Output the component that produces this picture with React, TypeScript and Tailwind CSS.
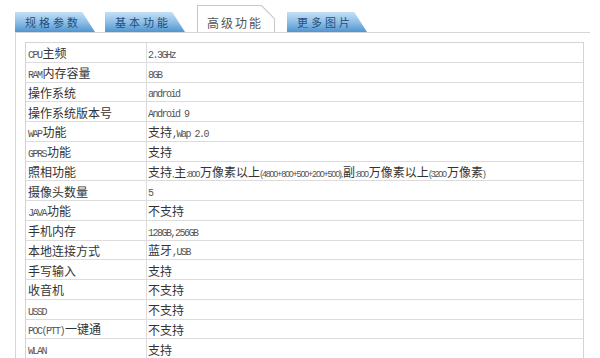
import React from "react";

const rows: { label: string; value: string; small?: boolean }[] = [
  { label: "CPU主频", value: "2.3GHz" },
  { label: "RAM内存容量", value: "8GB" },
  { label: "操作系统", value: "android" },
  { label: "操作系统版本号", value: "Android 9" },
  { label: "WAP功能", value: "支持,Wap 2.0" },
  { label: "GPRS功能", value: "支持" },
  {
    label: "照相功能",
    value: "支持,主:800万像素以上(4800+800+500+200+500),副:800万像素以上(3200万像素)",
    small: true
  },
  { label: "摄像头数量", value: "5" },
  { label: "JAVA功能", value: "不支持" },
  { label: "手机内存", value: "128GB,256GB" },
  { label: "本地连接方式", value: "蓝牙,USB" },
  { label: "手写输入", value: "支持" },
  { label: "收音机", value: "不支持" },
  { label: "USSD", value: "不支持" },
  { label: "POC(PTT)一键通", value: "不支持" },
  { label: "WLAN", value: "支持" }
];

// split text into CJK / latin runs so each gets its own size
const Mixed = ({ text, small }: { text: string; small?: boolean }) => {
  const parts = text.match(/[\u3000-\u9fff\uff00-\uffef]+|[^\u3000-\u9fff\uff00-\uffef]+/g) || [];
  return (
    <>
      {parts.map((p, i) =>
        /[\u3000-\u9fff\uff00-\uffef]/.test(p) ? (
          <span key={i} className="text-[12px] text-[#333] [font-family:'Noto_Sans_CJK_SC',sans-serif]">
            {p}
          </span>
        ) : small ? (
          <span key={i} className="text-[9px] tracking-[-1.2px] text-[#555] [font-family:'Liberation_Sans',sans-serif] pr-[1px]">
            {p}
          </span>
        ) : (
          <span key={i} className="text-[10px] tracking-[-1.5px] text-[#555] [font-family:'Liberation_Mono',monospace] pr-[1px]">
            {p}
          </span>
        )
      )}
    </>
  );
};

const Tab = ({ label }: { label: string }) => (
  <div className="w-[80px] h-[20px] [clip-path:polygon(0_0,84%_0,100%_100%,0_100%)] bg-gradient-to-b from-[#c4e0f5] via-[#8fbfe6] to-[#4f95cf] pl-[10px] flex items-center">
    <span className="text-[11px] tracking-[3px] text-[#1f4f80] leading-none [font-family:'Noto_Sans_CJK_SC',sans-serif]">
      {label}
    </span>
  </div>
);

const ActiveTab = ({ label }: { label: string }) => (
  <div className="w-[78px] h-[27px] bg-[#c8c8c8] [clip-path:polygon(0_0,83%_0,100%_50%,100%_100%,0_100%)] pt-px px-px">
    <div className="w-full h-full bg-white [clip-path:polygon(0_0,83%_0,100%_50%,100%_100%,0_100%)] pl-[9px] pt-[4px]">
      <span className="text-[12px] tracking-[2px] text-[#555] leading-none [font-family:'Noto_Sans_CJK_SC',sans-serif]">
        {label}
      </span>
    </div>
  </div>
);

export default function App() {
  return (
    <div className="w-[600px] h-[358px] overflow-hidden bg-white">
      {/* Tabs */}
      <div className="flex items-end pl-[15px] pt-[5px]">
        <Tab label="规格参数" />
        <div className="w-[10px]" />
        <Tab label="基本功能" />
        <div className="w-[12px]" />
        <ActiveTab label="高级功能" />
        <div className="w-[12px]" />
        <Tab label="更多图片" />
      </div>

      {/* Panel */}
      <div className="ml-[15px] w-[575px] border-l border-t border-[#d6d6d6] pl-[9px] pt-[9px]">
        <div className="w-[559px] border border-[#d4d4d4] border-b-0">
          {rows.map((row) => (
            <div key={row.label} className="flex h-[19.75px] border-b border-[#dcdcdc]">
              <div className="w-[121px] shrink-0 border-r border-[#dcdcdc] pl-[2px] flex items-center whitespace-nowrap leading-none">
                <span>
                  <Mixed text={row.label} />
                </span>
              </div>
              <div className="flex-1 pl-[1px] flex items-center whitespace-nowrap leading-none">
                <span>
                  <Mixed text={row.value} small={row.small} />
                </span>
              </div>
            </div>
          ))}
        </div>
      </div>
    </div>
  );
}
